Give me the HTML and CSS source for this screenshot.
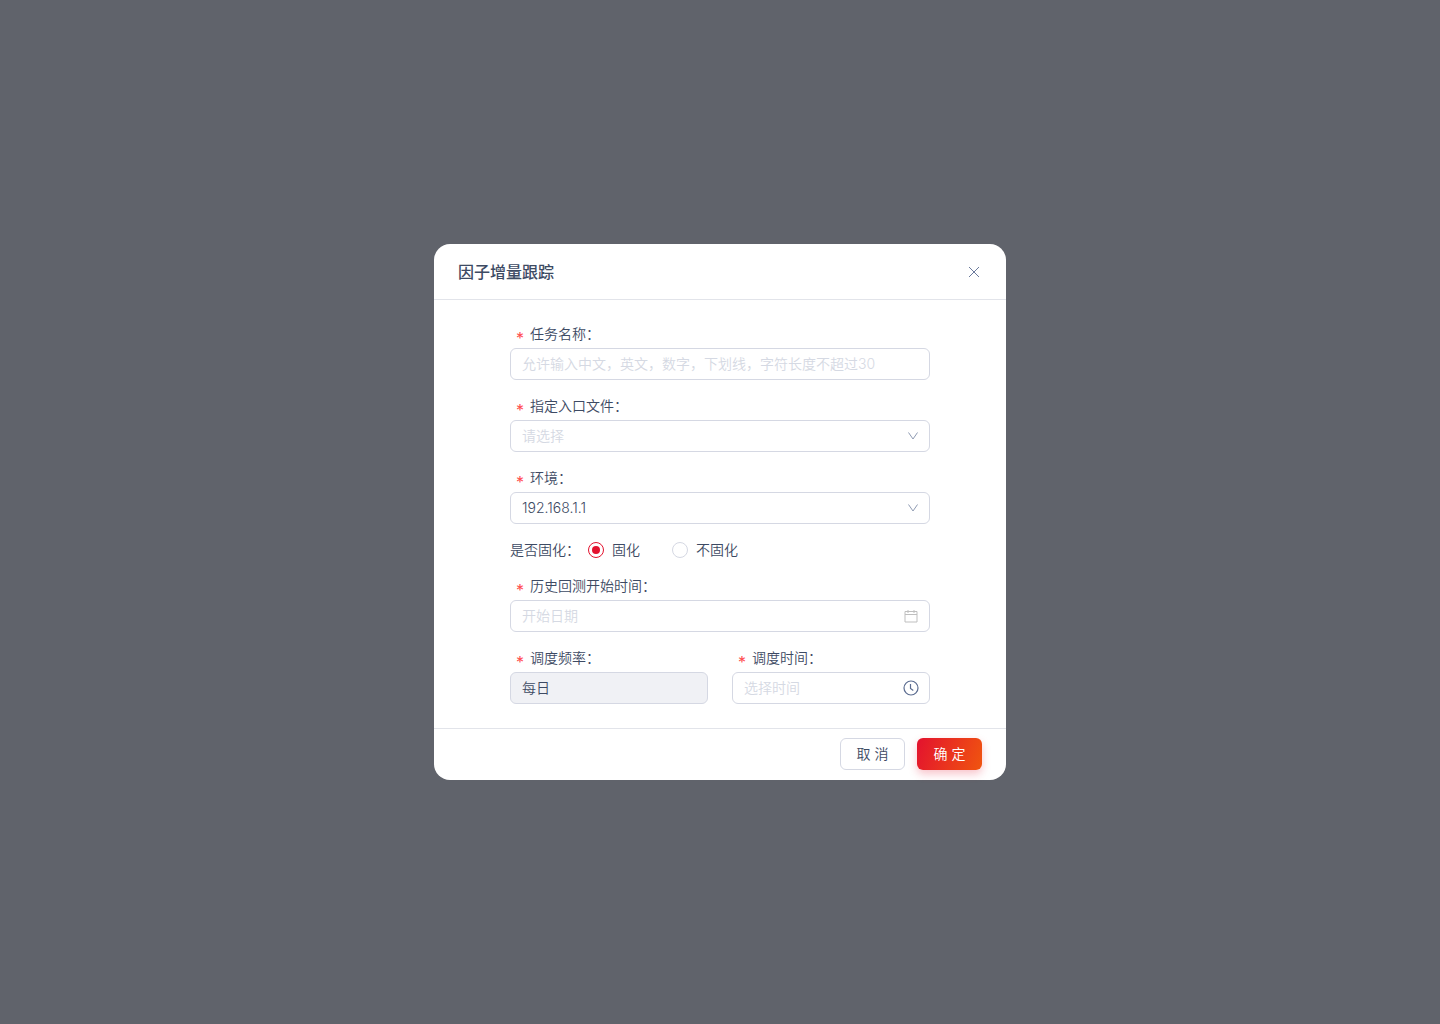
FILE: index.html
```html
<!DOCTYPE html>
<html lang="zh-CN">
<head>
<meta charset="utf-8">
<meta name="viewport" content="width=device-width, initial-scale=1">
<title>因子增量跟踪</title>
<link rel="stylesheet" href="styles.css">
</head>
<body>
<main class="overlay">
  <form class="modal" role="dialog" aria-labelledby="modal-title">
    <header class="modal-header">
      <h1 class="modal-title" id="modal-title">因子增量跟踪</h1>
      <button class="close" type="button" aria-label="关闭">
        <svg width="16" height="16" viewBox="0 0 16 16" fill="none" stroke="currentColor"><path d="M3 3l10 10M13 3L3 13"/></svg>
      </button>
    </header>
    <div class="modal-body">
      <div class="field">
        <label class="label required" for="name">任务名称：</label>
        <input class="control" id="name" type="text" placeholder="允许输入中文，英文，数字，下划线，字符长度不超过30">
      </div>
      <div class="field">
        <label class="label required" for="entry">指定入口文件：</label>
        <div class="control-wrap">
          <select class="control" id="entry" required>
            <option value="" selected>请选择</option>
            <option value="main">main.py</option>
          </select>
          <svg class="suffix arrow" width="12" height="12" viewBox="0 0 12 12" fill="none" stroke="currentColor"><path d="M1.500 2.500L6 9l4.500-6.500"/></svg>
        </div>
      </div>
      <div class="field">
        <label class="label required" for="env">环境：</label>
        <div class="control-wrap">
          <select class="control" id="env">
            <option>192.168.1.1</option>
          </select>
          <svg class="suffix arrow" width="12" height="12" viewBox="0 0 12 12" fill="none" stroke="currentColor"><path d="M1.500 2.500L6 9l4.500-6.500"/></svg>
        </div>
      </div>
      <div class="radio-row" role="radiogroup" aria-labelledby="fix-label">
        <span class="label" id="fix-label">是否固化：</span>
        <div class="radio-group">
          <label class="radio"><input type="radio" name="fix" checked>固化</label>
          <label class="radio"><input type="radio" name="fix">不固化</label>
        </div>
      </div>
      <div class="field">
        <label class="label required" for="start">历史回测开始时间：</label>
        <div class="control-wrap">
          <input class="control" id="start" type="text" placeholder="开始日期">
          <svg class="suffix calendar" width="14" height="14" viewBox="0 0 14 14" fill="none" stroke="currentColor"><path d="M1 2.500h12v10.500h-12zM1 5.500h12M4 1v3M10 1v3"/></svg>
        </div>
      </div>
      <div class="field-row">
        <div class="field">
          <label class="label required" for="freq">调度频率：</label>
          <input class="control" id="freq" type="text" value="每日" disabled>
        </div>
        <div class="field">
          <label class="label required" for="time">调度时间：</label>
          <div class="control-wrap">
            <input class="control" id="time" type="text" placeholder="选择时间">
            <svg class="suffix clock" width="16" height="16" viewBox="0 0 16 16" fill="none" stroke="currentColor" stroke-width="1.200"><circle cx="8" cy="8" r="7"/><path d="M7.500 4v4.500l2.800 2"/></svg>
          </div>
        </div>
      </div>
    </div>
    <footer class="modal-footer">
      <button class="btn" type="button">取 消</button>
      <button class="btn primary" type="submit">确 定</button>
    </footer>
  </form>
</main>
</body>
</html>
```
FILE: styles.css
```css
* {
  box-sizing: border-box;
}

body {
  margin: 0;
  font: 350 14px/20px Inter, "Noto Sans CJK SC", sans-serif;
  color: #3d4a63;
}

.overlay {
  display: flex;
  align-items: center;
  justify-content: center;
  min-height: 100vh;
  background: #60636b;
}

.modal {
  width: 100%;
  max-width: 572px;
  background: #fff;
  border-radius: 16px;
}

.modal-header {
  display: flex;
  align-items: center;
  justify-content: space-between;
  padding: 16px 24px 15px;
  border-bottom: 1px solid #e2e4ea;
}

.modal-title {
  margin: 0;
  font-size: 16px;
  line-height: 24px;
  font-weight: 500;
}

.close {
  display: flex;
  padding: 0;
  border: 0;
  background: none;
  color: #6b7a9c;
}

.modal-body {
  display: flex;
  flex-direction: column;
  gap: 16px;
  padding: 24px 76px;
}

.field {
  display: flex;
  flex-direction: column;
  gap: 4px;
}

.field-row {
  display: grid;
  grid-template-columns: 1fr 1fr;
  gap: 24px;
}

.label {
  display: flex;
  height: 20px;
}

.required::before {
  content: "*";
  width: 14px;
  margin-left: 6px;
  padding-top: 4px;
  font-family: Inter, sans-serif;
  font-size: 16px;
  font-weight: 400;
  color: #ff4d4f;
}

.control-wrap {
  display: grid;
  align-items: center;
}

.control-wrap > * {
  grid-area: 1 / 1;
}

.control {
  appearance: none;
  width: 100%;
  height: 32px;
  margin: 0;
  padding: 0 11px;
  border: 1px solid #d5d8e3;
  border-radius: 6px;
  background: #fff;
  font: inherit;
  color: inherit;
}

input.control {
  padding-bottom: 2px;
}

.control::placeholder,
.control:required:invalid {
  color: #d5d9e3;
  opacity: 1;
}

.control:disabled {
  background: #f0f1f5;
}

.suffix {
  justify-self: end;
  margin-right: 12px;
  pointer-events: none;
}

.arrow {
  margin-right: 11px;
  color: #8f9bb3;
}

.calendar {
  color: #bfbfbf;
}

.clock {
  margin-right: 11px;
  color: #5b6c90;
}

.radio-row {
  display: flex;
  gap: 8px;
}

.radio-group {
  display: flex;
  gap: 32px;
}

.radio {
  display: flex;
  align-items: center;
  gap: 8px;
}

.radio input {
  appearance: none;
  display: grid;
  place-items: center;
  width: 16px;
  height: 16px;
  margin: 0;
  border: 1px solid #d5d8e3;
  border-radius: 50%;
}

.radio input:checked {
  border-color: #e3122e;
}

.radio input:checked::before {
  content: "";
  width: 8px;
  height: 8px;
  border-radius: 50%;
  background: #e3122e;
}

.modal-footer {
  display: flex;
  justify-content: flex-end;
  gap: 12px;
  padding: 9px 24px 10px;
  border-top: 1px solid #e2e4ea;
}

.btn {
  height: 32px;
  min-width: 65px;
  padding: 0 15px;
  border: 1px solid #d5d8e3;
  border-radius: 6px;
  background: #fff;
  font: inherit;
  color: inherit;
}

.primary {
  border: 0;
  background: linear-gradient(110deg, #e3122e, #f0550f);
  box-shadow: 0 4px 8px rgba(227, 18, 46, 0.25);
  color: #fff;
}
```
